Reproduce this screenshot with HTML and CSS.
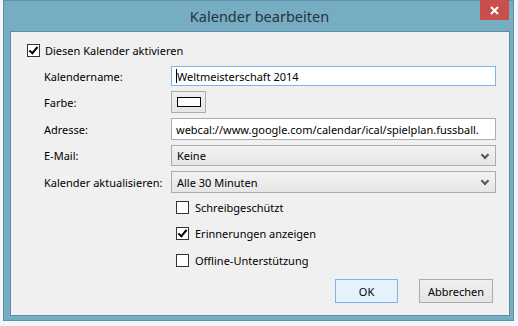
FILE: index.html
```html
<!DOCTYPE html>
<html lang="de">
<head>
    <meta charset="UTF-8">
    <title>Kalender bearbeiten</title>
    <link rel="stylesheet" href="styles.css">
</head>
<body>

    <div class="window">
        <!-- Title bar -->
        <div class="titlebar">
            <span class="title">Kalender bearbeiten</span>
            <span class="close">
                <svg width="9" height="9" viewBox="0 0 9 9"><path d="M1 1 L8 8 M8 1 L1 8" stroke="#fff" stroke-width="2"/></svg>
            </span>
        </div>

        <div class="client">
            <div class="check top-check">
                <span class="box checked"></span>
                <span>Diesen Kalender aktivieren</span>
            </div>

            <div class="form">
                <div class="label">Kalendername:</div>
                <div class="field input focus"><span class="caret"></span>Weltmeisterschaft 2014</div>

                <div class="label">Farbe:</div>
                <div class="field-wrap"><span class="color-btn"><span class="swatch"></span></span></div>

                <div class="label">Adresse:</div>
                <div class="field input">webcal://www.google.com/calendar/ical/spielplan.fussball.</div>

                <div class="label">E-Mail:</div>
                <div class="field select">Keine<span class="arrow"></span></div>

                <div class="label">Kalender aktualisieren:</div>
                <div class="field select">Alle 30 Minuten<span class="arrow"></span></div>
            </div>

            <div class="options">
                <div class="check"><span class="box"></span><span>Schreibgeschützt</span></div>
                <div class="check"><span class="box checked"></span><span>Erinnerungen anzeigen</span></div>
                <div class="check"><span class="box"></span><span>Offline-Unterstützung</span></div>
            </div>

            <div class="buttons">
                <span class="btn default">OK</span>
                <span class="btn">Abbrechen</span>
            </div>
        </div>
    </div>

</body>
</html>
```

FILE: styles.css
```css
body {
    margin: 0;
    background-color: #f3f5f7;
    font-family: "Noto Sans", "Open Sans", sans-serif;
    font-size: 11px;
    color: #000;
    height: 326px;
    overflow: hidden;
}
.window {
    margin-left: 3px;
    width: 511px;
    height: 321px;
    background-color: #76adc2;
    border: 1px solid #5d93a8;
    box-sizing: border-box;
    display: flex;
    flex-direction: column;
}
.titlebar {
    height: 30px;
    position: relative;
    display: flex;
    justify-content: center;
    align-items: center;
}
.title {
    font-size: 14.5px;
    color: #26343d;
    margin-left: 2px;
    margin-top: -1px;
}
.close {
    position: absolute;
    right: 4px;
    top: -1px;
    width: 29px;
    height: 20px;
    background-color: #c7504c;
    display: flex;
    align-items: center;
    justify-content: center;
}
.client {
    margin: 0 3px 4px 6px;
    flex: 1;
    background-color: #f0f0f0;
    border: 1px solid #5c8fa3;
    box-sizing: border-box;
    padding: 10px 0 0 16px;
}
.check {
    display: flex;
    align-items: center;
    gap: 5px;
    height: 14px;
}
.box {
    width: 11px;
    height: 11px;
    border: 1px solid #333;
    background: #fff;
    position: relative;
    flex: none;
}
.box.checked::after {
    content: "";
    position: absolute;
    left: 3px;
    top: 0px;
    width: 3px;
    height: 7px;
    border: solid #000;
    border-width: 0 2px 2px 0;
    transform: rotate(40deg);
}
.top-check {
    margin-top: 1px;
}
.form {
    display: grid;
    grid-template-columns: 127px 325px;
    grid-template-rows: 20px 22px 22px 21px 22px;
    row-gap: 5px;
    margin: 9px 0 0 17px;
    align-items: center;
}
.label {
    white-space: nowrap;
}
.field {
    height: 100%;
    box-sizing: border-box;
    border: 1px solid #abadb3;
    background: #fff;
    display: flex;
    align-items: center;
    padding-left: 4px;
    white-space: nowrap;
    overflow: hidden;
}
.focus {
    border-color: #7eb4ea;
}
.caret {
    width: 1px;
    height: 14px;
    background: #000;
}
.select {
    position: relative;
    border-color: #acacac;
    background: linear-gradient(#f2f2f2, #e6e6e6);
    padding-left: 5px;
}
.arrow {
    position: absolute;
    right: 7px;
    top: 6px;
    width: 4px;
    height: 4px;
    border: solid #555;
    border-width: 0 2px 2px 0;
    transform: rotate(45deg);
}
.field-wrap {
    height: 100%;
    display: flex;
}
.color-btn {
    width: 35px;
    height: 22px;
    box-sizing: border-box;
    border: 1px solid #acacac;
    background: linear-gradient(#f0f0f0, #e5e5e5);
    display: flex;
    align-items: center;
    justify-content: center;
}
.swatch {
    width: 22px;
    height: 8px;
    border: 1px solid #000;
    background: #fff;
}
.options {
    margin: 7px 0 0 149px;
    display: flex;
    flex-direction: column;
    gap: 12.5px;
}
.options .check {
    gap: 6px;
}
.buttons {
    display: flex;
    justify-content: flex-end;
    gap: 21px;
    margin: 12px 16px 0 0;
}
.btn {
    width: 74px;
    height: 24px;
    box-sizing: border-box;
    border: 1px solid #adadad;
    background: linear-gradient(#f0f0f0, #e5e5e5);
    display: flex;
    align-items: center;
    justify-content: center;
}
.btn.default {
    width: 63px;
    background: #e5f1fb;
    border-color: #7eb4ea;
}
```
